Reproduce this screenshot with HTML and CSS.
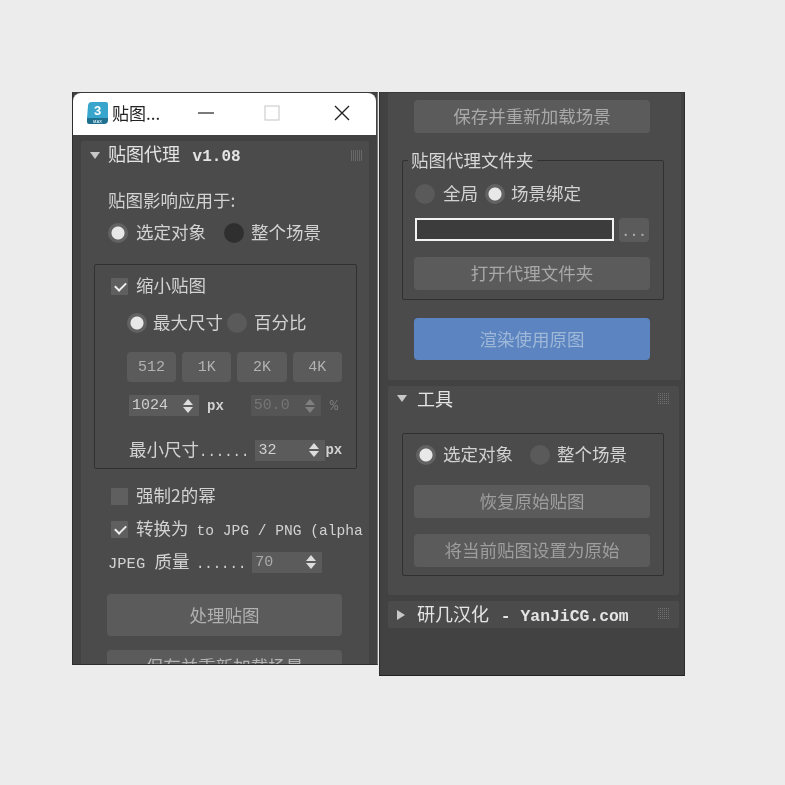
FILE: index.html
```html
<!DOCTYPE html>
<html lang="zh">
<head>
<meta charset="utf-8">
<title>贴图代理</title>
<link rel="stylesheet" href="styles.css">
</head>
<body>
<section class="window win-left">
  <header class="titlebar">
    <svg class="app-icon" viewBox="0 0 22 24" width="22" height="24"><path d="M2 5a4 4 0 0 1 4-4h14a2 2 0 0 1 2 2v14H1z" fill="#37a5cc"/><path d="M1 17h21v2a4 4 0 0 1-4 4H3a2 2 0 0 1-2-2z" fill="#1f6f8f"/><text x="11.5" y="13.5" text-anchor="middle" class="icon-three">3</text><text x="11.5" y="21.5" text-anchor="middle" class="icon-max">MAX</text></svg>
    <span class="title-text">贴图...</span>
    <svg class="win-btn btn-min" viewBox="0 0 16 16" width="16" height="16"><path d="M0 8h16" stroke="#222" stroke-width="1.2"/></svg>
    <svg class="win-btn btn-max" viewBox="0 0 16 16" width="16" height="16"><rect x="1" y="1" width="14" height="14" fill="none" stroke="#cfcfcf" stroke-width="1.2"/></svg>
    <svg class="win-btn btn-close" viewBox="0 0 16 16" width="16" height="16"><path d="M1 1l14 14M15 1L1 15" stroke="#222" stroke-width="1.4"/></svg>
  </header>
  <div class="rollout roll-main">
    <div class="roll-head"><span class="tri down"></span><span class="roll-title">贴图代理<span class="mono-head version"> v1.08</span></span><span class="grip"></span></div>
    <p class="label affect">贴图影响应用于:</p>
    <div class="row radios r1">
      <span class="radio on"></span><span class="label">选定对象</span>
      <span class="radio dark gap-l"></span><span class="label">整个场景</span>
    </div>
    <div class="group g-shrink">
      <div class="row check-row c1"><span class="check on"></span><span class="label">缩小贴图</span></div>
      <div class="row radios r2">
        <span class="radio on snug"></span><span class="label">最大尺寸</span>
        <span class="radio tight"></span><span class="label">百分比</span>
      </div>
      <div class="size-btns">
        <span class="btn small">512</span><span class="btn small">1K</span><span class="btn small">2K</span><span class="btn small">4K</span>
      </div>
      <div class="row spin-row">
        <span class="spin w70"><span class="val">1024</span><span class="arrows"></span></span><span class="unit">px</span>
        <span class="spin w70 off push"><span class="val">50.0</span><span class="arrows"></span></span><span class="unit pct">%</span>
      </div>
      <div class="row min-row">
        <span class="label">最小尺寸<span class="dots">......</span></span>
        <span class="spin w70"><span class="val">32</span><span class="arrows"></span></span><span class="unit tight-unit">px</span>
      </div>
    </div>
    <div class="row check-row c2"><span class="check"></span><span class="label">强制2的幂</span></div>
    <div class="row check-row c3"><span class="check on"></span><span class="label nowrap">转换为 <span class="mono">to JPG / PNG (alpha</span></span></div>
    <div class="row jpeg-row"><span class="label nowrap"><span class="mono-l">JPEG </span>质量<span class="dots"> ......</span></span><span class="spin w70"><span class="val">70</span><span class="arrows"></span></span></div>
    <span class="btn wide tall process">处理贴图</span>
    <span class="btn wide save">保存并重新加载场景</span>
  </div>
</section>

<section class="window win-right">
  <div class="rollout roll-cont">
    <span class="btn wide first">保存并重新加载场景</span>
    <div class="group g-folder">
      <span class="legend">贴图代理文件夹</span>
      <div class="row radios r3">
        <span class="radio"></span><span class="label">全局</span>
        <span class="radio on near"></span><span class="label">场景绑定</span>
      </div>
      <div class="row path-row"><span class="path"></span><span class="btn dots-btn">...</span></div>
      <span class="btn wide open">打开代理文件夹</span>
    </div>
    <span class="btn wide tall blue">渲染使用原图</span>
  </div>
  <div class="rollout roll-tools">
    <div class="roll-head"><span class="tri down"></span><span class="roll-title wide-title">工具</span><span class="grip"></span></div>
    <div class="group g-tools">
      <div class="row radios r4">
        <span class="radio on"></span><span class="label">选定对象</span>
        <span class="radio gap-l"></span><span class="label">整个场景</span>
      </div>
      <span class="btn wide restore">恢复原始贴图</span>
      <span class="btn wide setorig">将当前贴图设置为原始</span>
    </div>
  </div>
  <div class="rollout roll-credit">
    <div class="roll-head"><span class="tri right"></span><span class="roll-title wide-title">研几汉化<span class="mono-head credit"> - YanJiCG.com</span></span><span class="grip"></span></div>
  </div>
</section>
</body>
</html>
```
FILE: styles.css
```css
* { box-sizing: border-box; }
html, body { margin: 0; height: 100%; }
body {
  background: #ececec;
  position: relative;
  font-family: "Noto Sans CJK SC", "Liberation Serif", serif;
  color: #d2d2d2;
  font-size: 17.5px;
  overflow: hidden;
}
p { margin: 0; }
.window {
  position: absolute;
  top: 92px;
  width: 306px;
  background: #424242;
  border: 1px solid #2e2e2e;
  border-top-color: #3a3a3a;
  overflow: hidden;
  filter: blur(0.45px);
}
.win-left { left: 72px; height: 573px; border-right-color: #777; }
.win-right { left: 379px; height: 584px; padding-top: 0; border-bottom-color: #222; }

.titlebar {
  height: 42px;
  background: #fff;
  border-radius: 8px 8px 0 0;
  display: flex;
  align-items: center;
  position: relative;
  padding-left: 13px;
  margin-right: 1px;
  color: #222;
}
.app-icon { flex: none; margin-bottom: 3px; }
.icon-three { font: 700 13px "Liberation Sans", sans-serif; fill: #fff; }
.icon-max { font: 700 4px "Liberation Sans", sans-serif; fill: #cfe6ef; }
.title-text { margin-left: 4px; font-size: 17px; padding-bottom: 3px; }
.win-btn { position: absolute; top: 12px; }
.btn-min { left: 125px; }
.btn-max { left: 191px; }
.btn-close { left: 261px; }

.rollout { background: #4b4b4b; margin: 0 8px; border-radius: 2px; }
.roll-main { height: 540px; margin-top: 6px; overflow: hidden; }
.roll-cont { height: 287px; padding-top: 7px; margin: 0 3px 0 8px; }
.roll-tools { height: 209px; margin: 6px 5px 0 8px; }
.roll-credit { height: 27px; margin: 6px 5px 0 8px; }

.roll-head { height: 27px; display: flex; align-items: center; padding-left: 9px; position: relative; }
.roll-main .roll-head { height: 28px; }
.roll-tools .roll-head { height: 24px; }
.roll-title { margin-left: 8px; color: #e4e4e4; white-space: nowrap; line-height: 1; font-size: 18px; }
.wide-title { margin-left: 10px; }
.roll-credit .wide-title { margin-left: 12px; }
.mono-head { font: 700 16px "Liberation Mono", monospace; }
.mono-head.version { margin-left: 3px; }
.mono-head.credit { font-size: 16.4px; margin-left: 2px; }
.tri { width: 0; height: 0; flex: none; border-style: solid; }
.tri.down { border-width: 7px 5px 0 5px; border-color: #c8c8c8 transparent transparent; }
.tri.right { border-width: 5px 0 5px 8px; border-color: transparent transparent transparent #c8c8c8; }
.grip {
  position: absolute;
  right: 10px;
  top: 7px;
  width: 11px;
  height: 11px;
  background:
    repeating-linear-gradient(0deg, transparent 0 1px, #4b4b4b 1px 2px),
    repeating-linear-gradient(90deg, #707070 0 1px, #4b4b4b 1px 2px);
}
.roll-main .grip { right: 7px; top: 9px; background: repeating-linear-gradient(90deg, #686868 0 1px, #4b4b4b 1px 2px); }

.row { display: flex; align-items: center; }
.label { line-height: 22px; padding-bottom: 2px; white-space: nowrap; }
.nowrap { white-space: nowrap; }
.mono { font: 14.6px "Liberation Mono", monospace; margin-left: 4px; }
.mono-l { font: 15.5px "Liberation Mono", monospace; }
.dots { font: 14px "Liberation Mono", monospace; }
.unit { font: 700 14px "Liberation Mono", monospace; margin-left: 8px; }
.unit.pct { color: #7a7a7a; margin-left: 9px; font-weight: 400; }
.tight-unit { margin-left: 0; }

.affect { margin: 20px 0 0 27px; }
.r1 { margin: 8px 0 0 27px; height: 24px; }
.radio {
  width: 20px;
  height: 20px;
  border-radius: 50%;
  background: #5a5a5a;
  flex: none;
  margin-right: 8px;
}
.radio.on { background: radial-gradient(circle, #e8e8e8 0 6px, #626262 7px); }
.radio.dark { background: #2f2f2f; }
.radio.gap-l { margin-left: 18px; margin-right: 7px; }
.radio.snug { margin-right: 6px; }
.radio.tight { margin-left: 4px; margin-right: 7px; }
.radio.near { margin-left: 7px; margin-right: 6px; }

.group { border: 1px solid #303030; border-radius: 2px; position: relative; }
.g-shrink { margin: 19px 0 0 13px; width: 263px; height: 205px; padding: 9px 0 0 16px; }
.c1 { height: 24px; }
.check { width: 17px; height: 17px; background: #5f5f5f; flex: none; margin-right: 8px; border-radius: 1px; position: relative; }
.check.on::after {
  content: "";
  position: absolute;
  left: 4px;
  top: 4px;
  width: 9px;
  height: 5px;
  border-left: 2.5px solid #eee;
  border-bottom: 2.5px solid #eee;
  transform: rotate(-45deg);
}
.r2 { height: 24px; margin: 13px 0 0 16px; }
.size-btns { display: flex; gap: 6px; margin: 17px 0 0 16px; }
.btn {
  display: flex;
  align-items: center;
  justify-content: center;
  background: #5b5b5b;
  color: #b2b2b2;
  border-radius: 4px;
  white-space: nowrap;
  padding-bottom: 2px;
}
.btn.small { width: 49.2px; height: 30px; font: 15px "Liberation Mono", monospace; padding-bottom: 0; }
.spin-row { margin: 13px 0 0 18px; height: 21px; }
.spin {
  display: flex;
  align-items: center;
  height: 21px;
  background: #5b5b5b;
  padding: 0 6px 0 3px;
  justify-content: space-between;
  font: 15px "Liberation Mono", monospace;
  color: #cfcfcf;
  flex: none;
}
.w70 { width: 70px; }
.spin.off { color: #757575; background: #555; }
.spin.off .arrows::before { border-bottom-color: #808080; }
.spin.off .arrows::after { border-top-color: #808080; }
.push { margin-left: 27px; }
.arrows { display: flex; flex-direction: column; gap: 2px; width: 10px; }
.arrows::before, .arrows::after { content: ""; width: 0; height: 0; border-style: solid; }
.arrows::before { border-width: 0 5px 6px; border-color: transparent transparent #ddd; }
.arrows::after { border-width: 6px 5px 0; border-color: #ddd transparent transparent; }
.min-row { margin: 22px 0 0 18px; height: 24px; }
.min-row .spin { margin-left: 6px; }

.c2 { margin: 15px 0 0 30px; height: 24px; }
.c3 { margin: 9px 0 0 30px; height: 24px; }
.jpeg-row { margin: 9px 0 0 27px; height: 24px; }
.jpeg-row .dots { margin-left: -2px; }
.jpeg-row .spin { margin-left: 6px; }
.jpeg-row .spin .val { color: #aaa; }

.btn.wide { width: 236px; height: 33px; font-size: 17.5px; }
.btn.tall { height: 42px; }
.process { margin: 20px 0 0 26px; }
.btn.process, .btn.save { width: 235px; }
.save { margin: 14px 0 0 26px; }

.first { margin: 0 0 0 26px; }
.g-folder { margin: 27px 0 0 14px; width: 262px; height: 140px; }
.legend {
  position: absolute;
  left: 5px;
  top: -13px;
  background: #4b4b4b;
  padding: 0 3px;
  line-height: 24px;
  color: #d8d8d8;
}
.r3 { margin: 21px 0 0 12px; height: 24px; }
.path-row { margin: 12px 0 0 12px; align-items: flex-start; }
.path { width: 199px; height: 23px; background: #3c3c3c; border: 2px solid #f2f2f2; flex: none; }
.dots-btn { width: 30px; height: 24px; margin-left: 5px; font: 700 14px "Liberation Mono", monospace; color: #a8a8a8; align-items: flex-end; }
.open { margin: 15px 0 0 11px; }
.blue { margin: 18px 0 0 26px; background: #5b84c0; color: #9fb8d8; }

.g-tools { margin: 23px 0 0 14px; width: 262px; height: 143px; }
.r4 { margin: 9px 0 0 13px; height: 24px; }
.r4 .radio.on { margin-right: 7px; }
.r4 .gap-l { margin-left: 17px; }
.restore { margin: 18px 0 0 11px; }
.setorig { margin: 16px 0 0 11px; }
.restore, .setorig { color: #9e9e9e; }
.btn.first, .open { color: #a8a8a8; }
.process { color: #b0b0b0; }
```
